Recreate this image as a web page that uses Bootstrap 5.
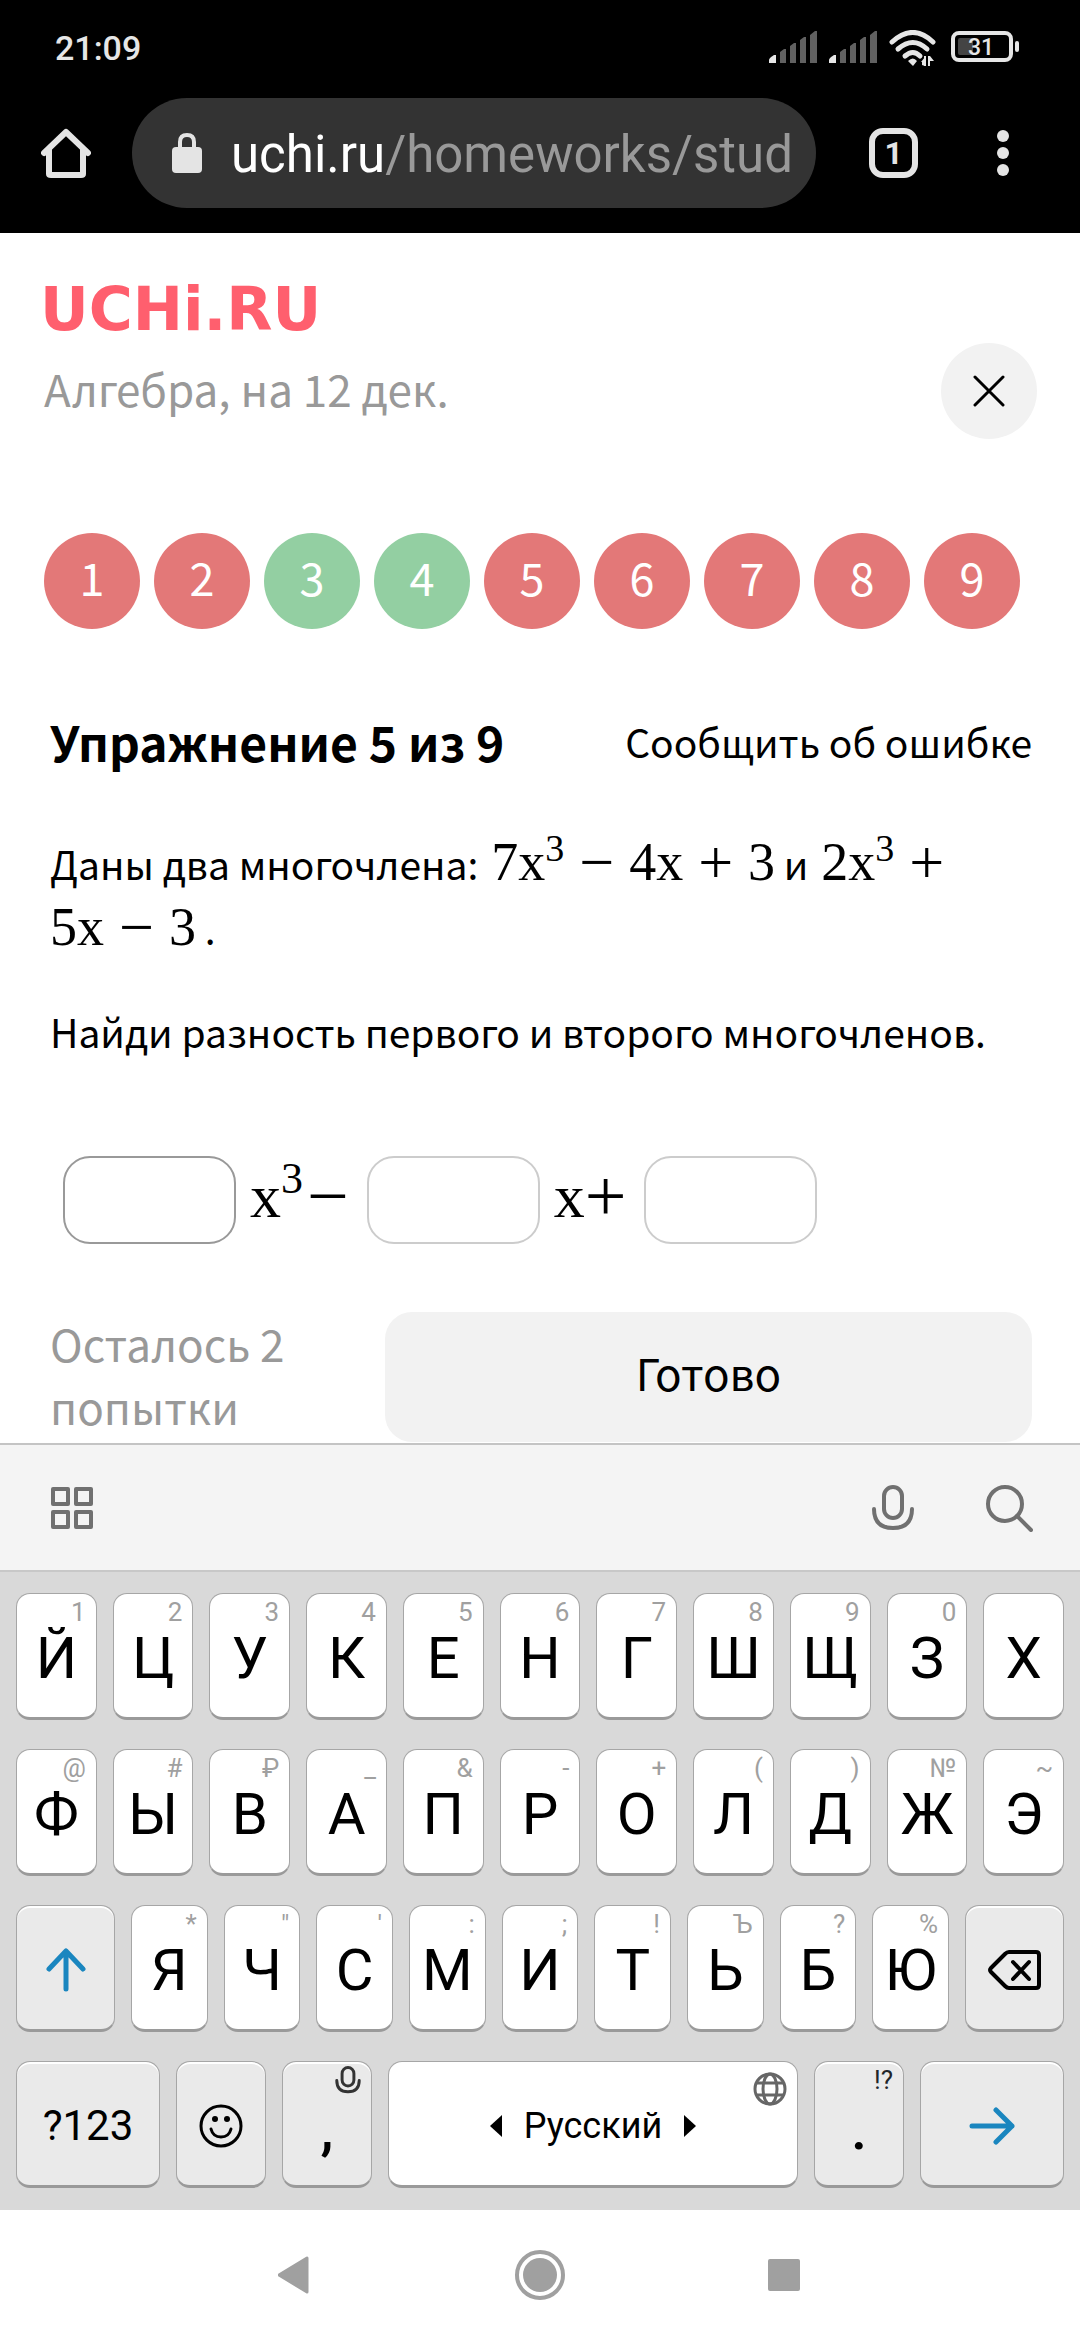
<!DOCTYPE html>
<html lang="ru">
<head>
<meta charset="utf-8">
<meta name="viewport" content="width=device-width, initial-scale=1">
<title>Учи.ру — Алгебра</title>
<link href="https://cdn.jsdelivr.net/npm/bootstrap@5.3.0/dist/css/bootstrap.min.css" rel="stylesheet">
<style>
  body { font-family: "Noto Sans CJK SC", "Noto Sans", sans-serif; background: #fff; color: #000; }
  svg { display: block; flex: none; }
  button { color: inherit; }
  .roboto { font-family: Roboto, sans-serif; }

  /* Status bar and browser bar */
  .statusbar { height: 98px; padding: 0 60px 2px 55px; color: #e6e6e6; font-size: 34px; line-height: 40px; }
  .browserbar { padding: 0 41px 25px; }
  .address { height: 110px; margin-left: 41px; margin-right: 53px; padding: 0 21px 0 40px; background: #333; }
  .url { font-size: 51px; line-height: 60px; padding-top: 4px; color: #999; margin-left: 29px; }
  .url b { color: #fff; font-weight: 400; }
  .bare { background: none; border: 0; padding: 0; }
  .tabs-btn { width: 50px; height: 50px; border: 6px solid #e4e4e4; border-radius: 14px; color: #e4e4e4; font-size: 32px; line-height: 38px; }
  .menu-btn { margin-left: 73px; margin-right: 24px; }

  /* Lesson page */
  .page-top { padding: 55px 43px 0 44px; }
  .subject { font-size: 44px; line-height: 60px; margin-top: 28px; color: #999; }
  .close-btn { width: 96px; height: 96px; margin-top: 55px; background: #f2f2f2; }
  .steps { gap: 14px; margin-top: 94px; }
  .step { width: 96px; height: 96px; font-size: 45px; line-height: 88px; color: #fff; background: #e37878; text-decoration: none; text-align: center; }
  .step-ok { background: #93cfa2; }
  .task { padding: 82px 48px 0 50px; font-size: 39px; line-height: 60px; }
  .task-title { font-size: 48px; line-height: 60px; font-weight: 700; }
  .report { color: #000; text-decoration: none; }
  .given { line-height: 65px; margin: 60px 0 40px; }
  .formula { font-family: "Liberation Serif", serif; font-size: 54px; line-height: 0; margin-left: 4px; }
  .formula sup { font-size: 38px; line-height: 0; top: 0; vertical-align: 19px; }
  .op { margin: 0 15px; font-size: 62px; line-height: 0; vertical-align: -3px; }
  .answer { padding-left: 13px; margin-top: 95px; font-family: "Liberation Serif", serif; font-size: 62px; }
  .answer sup { font-size: 44px; line-height: 0; top: 0; vertical-align: 24px; margin-right: 4px; }
  .sign { font-size: 74px; line-height: 0; vertical-align: -4px; }
  .term { margin: 0 18px 0 14px; line-height: 80px; padding-bottom: 8px; }
  .blank { width: 173px; height: 88px; border: 2px solid #ccc; border-radius: 27px; padding: 0 20px; }
  .blank-on { border-color: #999; }
  .finish { margin-top: 68px; }
  .attempts { width: 335px; font-size: 44px; line-height: 63px; color: #999; }
  .done-btn { height: 130px; border: 0; border-radius: 27px; background: #f2f2f2; font-size: 44px; padding-bottom: 12px; }

  /* Keyboard */
  .kb-tools { height: 129px; padding: 0 47px 0 50px; background: #f4f4f4; border-top: 2px solid #c4c4c4; border-bottom: 2px solid #c8c8c8; }
  .search-btn { margin-left: 70px; }
  .kb { background: #d9d9d9; padding: 21px 16px 22px; gap: 29px; }
  .kb-row { gap: 16px; }
  .kb-key { position: relative; flex: 1 1 0; min-width: 0; height: 127px; padding: 4px 0 0; border: 1px solid #a6a6a6; border-bottom: 3px solid #9a9a9a; border-radius: 14px; background: #fff; color: #000; font-size: 58px; line-height: 1; }
  .kb-fn { background: #eaeaea; box-shadow: inset 0 2px 0 #fff; }
  .kb-hint { position: absolute; top: 4px; right: 10px; font-size: 26px; line-height: 28px; color: #a0a0a0; }
  .w-side { flex: 0 0 99px; }
  .w-wide { flex: 0 0 144px; font-size: 42px; }
  .w-small { flex: 0 0 90px; }
  .low { padding-top: 10px; font-weight: 500; }
  .space { font-size: 36px; gap: 22px; }
  .sysnav { height: 130px; background: #fff; }
</style>
</head>
<body>
<div class="d-flex flex-column min-vh-100">

  <header class="bg-black roboto">
    <div class="statusbar d-flex align-items-center fw-medium">
      <span class="me-auto">21:09</span>
      <svg width="251" height="36" viewBox="0 0 251 36" role="img" aria-label="Сеть, Wi-Fi, заряд 31%">
        <g id="sig">
          <path fill="#e6e6e6" d="M0 33v-3q0-2 5-5h2v8z"/>
          <path fill="#616161" d="M11 33V22l4-3h2v14zM21 33V16l4-3h2v20zM31 33V10l4-3h2v26zM41 33V5l5-4h2v32z"/>
        </g>
        <use href="#sig" x="60"/>
        <g fill="none" stroke="#e6e6e6" stroke-width="5" stroke-linecap="round">
          <path d="M123 12Q144-7 164 12"/><path d="M129 19q15-13 29 0" /><path d="M136 26q8-7 15 0"/>
        </g>
        <path fill="#e6e6e6" d="M139 31q5-5 9 0l-4 5zM153 35v-3h-1l4-5v9zM155 26h2v10h-2zM159 36V26h2v10zM161 26l4 5h-4z"/>
        <rect x="184" y="3" width="58" height="27" rx="6" fill="none" stroke="#e6e6e6" stroke-width="4"/>
        <rect x="189" y="8" width="15" height="17" rx="2" fill="#444"/>
        <rect x="246" y="11" width="4" height="11" rx="2" fill="#e6e6e6"/>
        <text x="212" y="25" text-anchor="middle" font-size="23" fill="#e6e6e6">31</text>
      </svg>
    </div>
    <div class="browserbar d-flex align-items-center">
      <button class="bare" type="button" aria-label="Домой">
        <svg width="50" height="50" viewBox="0 0 50 50" fill="none" stroke="#e4e4e4" stroke-width="6" stroke-linecap="round" stroke-linejoin="round"><path d="M3 25 25 4l22 21M8 21v25q0 1 2 1h30q2 0 2-1V21"/></svg>
      </button>
      <div class="address rounded-pill d-flex align-items-center flex-grow-1 overflow-hidden">
        <svg width="30" height="40" viewBox="0 0 30 40"><rect y="14" width="30" height="26" rx="4" fill="#e4e4e4"/><path d="M8 15V9q0-7 7-7t7 7v6" fill="none" stroke="#e4e4e4" stroke-width="4"/></svg>
        <div class="url overflow-hidden text-nowrap flex-grow-1"><b>uchi.ru</b>/homeworks/stude</div>
      </div>
      <button class="tabs-btn bg-transparent p-0 fw-bold" type="button" aria-label="Вкладки">1</button>
      <button class="menu-btn bare" type="button" aria-label="Меню">
        <svg width="24" height="50" viewBox="0 0 24 50" fill="#e4e4e4"><circle cx="12" cy="8" r="6"/><circle cx="12" cy="25" r="6"/><circle cx="12" cy="42" r="6"/></svg>
      </button>
    </div>
  </header>

  <main class="flex-grow-1">
    <div class="page-top">
      <div class="d-flex justify-content-between align-items-start">
        <div>
          <svg width="290" height="42" viewBox="0 0 290 42" overflow="visible"><text x="-4" y="42" font-family="DejaVu Sans" font-weight="700" font-size="60" fill="#ff5f6e">UCHi.RU</text></svg>
          <div class="subject">Алгебра, на 12 дек.</div>
        </div>
        <button class="close-btn border-0 rounded-circle d-flex align-items-center justify-content-center" type="button" aria-label="Закрыть">
          <svg width="32" height="32" viewBox="0 0 32 32" stroke="#000" stroke-width="3" stroke-linecap="round"><path d="m2 2 28 28M30 2 2 30"/></svg>
        </button>
      </div>
      <nav class="steps d-flex" aria-label="Упражнения">
        <a class="step rounded-circle" href="#">1</a>
        <a class="step rounded-circle" href="#">2</a>
        <a class="step step-ok rounded-circle" href="#">3</a>
        <a class="step step-ok rounded-circle" href="#">4</a>
        <a class="step rounded-circle" href="#">5</a>
        <a class="step rounded-circle" href="#">6</a>
        <a class="step rounded-circle" href="#">7</a>
        <a class="step rounded-circle" href="#">8</a>
        <a class="step rounded-circle" href="#">9</a>
      </nav>
    </div>

    <form class="task">
      <div class="d-flex justify-content-between align-items-center">
        <h1 class="task-title m-0">Упражнение 5 из 9</h1>
        <a class="report" href="#">Сообщить об ошибке</a>
      </div>
      <p class="given">Даны два многочлена: <span class="formula">7x<sup>3</sup><span class="op">−</span>4x<span class="op">+</span>3</span> и <span class="formula">2x<sup>3</sup><span class="op">+</span> <br>5x<span class="op">−</span>3</span> .</p>
      <p class="m-0">Найди разность первого и второго многочленов.</p>
      <div class="answer d-flex align-items-center">
        <input class="blank blank-on" type="text" aria-label="Коэффициент при x³">
        <span class="term">x<sup>3</sup><span class="sign">−</span></span>
        <input class="blank" type="text" aria-label="Коэффициент при x">
        <span class="term">x<span class="sign">+</span></span>
        <input class="blank" type="text" aria-label="Свободный член">
      </div>
      <div class="finish d-flex">
        <div class="attempts flex-shrink-0">Осталось 2<br>попытки</div>
        <button class="done-btn flex-grow-1" type="button">Готово</button>
      </div>
    </form>
  </main>

  <section class="roboto" aria-label="Клавиатура">
    <div class="kb-tools d-flex align-items-center">
      <button class="bare me-auto" type="button" aria-label="Панель">
        <svg width="44" height="44" viewBox="0 0 44 44" fill="none" stroke="#707070" stroke-width="4" stroke-linejoin="round"><rect x="3" y="3" width="15" height="15"/><rect x="26" y="3" width="15" height="15"/><rect x="3" y="26" width="15" height="15"/><rect x="26" y="26" width="15" height="15"/></svg>
      </button>
      <button class="bare" type="button" aria-label="Голосовой ввод">
        <svg width="44" height="46" viewBox="0 0 44 46" fill="none" stroke="#707070" stroke-width="4" stroke-linecap="round"><rect x="13" y="2" width="18" height="31" rx="9"/><path d="M3 24q0 19 19 19t19-19"/></svg>
      </button>
      <button class="bare search-btn" type="button" aria-label="Поиск">
        <svg width="48" height="48" viewBox="0 0 48 48" fill="none" stroke="#707070" stroke-width="4" stroke-linecap="round"><circle cx="20" cy="20" r="17"/><path d="m32 32 14 14"/></svg>
      </button>
    </div>
    <div class="kb d-flex flex-column">
      <div class="kb-row d-flex">
        <button class="kb-key" type="button">Й<span class="kb-hint">1</span></button>
        <button class="kb-key" type="button">Ц<span class="kb-hint">2</span></button>
        <button class="kb-key" type="button">У<span class="kb-hint">3</span></button>
        <button class="kb-key" type="button">К<span class="kb-hint">4</span></button>
        <button class="kb-key" type="button">Е<span class="kb-hint">5</span></button>
        <button class="kb-key" type="button">Н<span class="kb-hint">6</span></button>
        <button class="kb-key" type="button">Г<span class="kb-hint">7</span></button>
        <button class="kb-key" type="button">Ш<span class="kb-hint">8</span></button>
        <button class="kb-key" type="button">Щ<span class="kb-hint">9</span></button>
        <button class="kb-key" type="button">З<span class="kb-hint">0</span></button>
        <button class="kb-key" type="button">Х</button>
      </div>
      <div class="kb-row d-flex">
        <button class="kb-key" type="button">Ф<span class="kb-hint">@</span></button>
        <button class="kb-key" type="button">Ы<span class="kb-hint">#</span></button>
        <button class="kb-key" type="button">В<span class="kb-hint">₽</span></button>
        <button class="kb-key" type="button">А<span class="kb-hint">_</span></button>
        <button class="kb-key" type="button">П<span class="kb-hint">&amp;</span></button>
        <button class="kb-key" type="button">Р<span class="kb-hint">-</span></button>
        <button class="kb-key" type="button">О<span class="kb-hint">+</span></button>
        <button class="kb-key" type="button">Л<span class="kb-hint">(</span></button>
        <button class="kb-key" type="button">Д<span class="kb-hint">)</span></button>
        <button class="kb-key" type="button">Ж<span class="kb-hint">№</span></button>
        <button class="kb-key" type="button">Э<span class="kb-hint">~</span></button>
      </div>
      <div class="kb-row d-flex">
        <button class="kb-key kb-fn w-side d-flex align-items-center justify-content-center" type="button" aria-label="Shift">
          <svg width="40" height="44" viewBox="0 0 40 44" fill="none" stroke="#1a86bf" stroke-width="5" stroke-linecap="round" stroke-linejoin="round"><path d="M20 41V3M3 21 20 3l17 18"/></svg>
        </button>
        <button class="kb-key" type="button">Я<span class="kb-hint">*</span></button>
        <button class="kb-key" type="button">Ч<span class="kb-hint">"</span></button>
        <button class="kb-key" type="button">С<span class="kb-hint">'</span></button>
        <button class="kb-key" type="button">М<span class="kb-hint">:</span></button>
        <button class="kb-key" type="button">И<span class="kb-hint">;</span></button>
        <button class="kb-key" type="button">Т<span class="kb-hint">!</span></button>
        <button class="kb-key" type="button">Ь<span class="kb-hint">Ъ</span></button>
        <button class="kb-key" type="button">Б<span class="kb-hint">?</span></button>
        <button class="kb-key" type="button">Ю<span class="kb-hint">%</span></button>
        <button class="kb-key kb-fn w-side d-flex align-items-center justify-content-center" type="button" aria-label="Удалить">
          <svg width="54" height="42" viewBox="0 0 54 42" fill="none" stroke="#000" stroke-width="4" stroke-linecap="round" stroke-linejoin="round"><path d="M3 19 17 5q2-2 4-2h27q3 0 3 3v30q0 3-3 3H21q-2 0-4-2L3 23q-2-2 0-4zM25 13l16 17M41 13 25 30"/></svg>
        </button>
      </div>
      <div class="kb-row d-flex">
        <button class="kb-key kb-fn w-wide" type="button">?123</button>
        <button class="kb-key kb-fn w-small d-flex align-items-center justify-content-center" type="button" aria-label="Эмодзи">
          <svg width="46" height="46" viewBox="0 0 46 46" fill="none" stroke="#000" stroke-width="3" stroke-linecap="round"><circle cx="23" cy="23" r="20"/><path d="M13 26q2 8 10 8t10-8"/><circle cx="17" cy="16" r="3" fill="#000" stroke="none"/><circle cx="29" cy="16" r="3" fill="#000" stroke="none"/></svg>
        </button>
        <button class="kb-key kb-fn w-small low" type="button">,<span class="kb-hint"><svg width="26" height="28" viewBox="0 0 44 46" fill="none" stroke="#333" stroke-width="5" stroke-linecap="round"><rect x="12" y="2" width="20" height="31" rx="10"/><path d="M3 24q0 19 19 19t19-19"/></svg></span></button>
        <button class="kb-key space d-flex align-items-center justify-content-center" type="button">
          <svg width="12" height="22" viewBox="0 0 12 22"><path d="M12 0v22L0 11z"/></svg>
          <span>Русский</span>
          <svg width="12" height="22" viewBox="0 0 12 22"><path d="M0 0v22l12-11z"/></svg>
          <span class="kb-hint"><svg width="34" height="40" viewBox="0 -6 34 40" fill="none" stroke="#666" stroke-width="3"><circle cx="17" cy="17" r="15"/><ellipse cx="17" cy="17" rx="7" ry="15"/><path d="M4 11h26M4 23h26"/></svg></span>
        </button>
        <button class="kb-key kb-fn w-small low" type="button">.<span class="kb-hint text-dark fw-normal">!?</span></button>
        <button class="kb-key kb-fn w-wide d-flex align-items-center justify-content-center" type="button" aria-label="Далее">
          <svg width="46" height="40" viewBox="0 0 46 40" fill="none" stroke="#1a86bf" stroke-width="5" stroke-linecap="round" stroke-linejoin="round"><path d="M3 20h40M27 4l16 16-16 16"/></svg>
        </button>
      </div>
    </div>
    <nav class="sysnav d-flex align-items-center justify-content-center" aria-label="Система">
      <svg width="524" height="50" viewBox="0 0 524 50" fill="#a0a0a0" stroke="#a0a0a0" stroke-linejoin="round"><path d="M1 25 29 8v34z" stroke-width="3"/><circle cx="262" cy="25" r="23" fill="none" stroke-width="4"/><circle cx="262" cy="25" r="17" stroke="none"/><rect x="490" y="9" width="32" height="32" rx="2" stroke="none"/></svg>
    </nav>
  </section>
</div>
<script src="https://cdn.jsdelivr.net/npm/bootstrap@5.3.0/dist/js/bootstrap.bundle.min.js"></script>
</body>
</html>
